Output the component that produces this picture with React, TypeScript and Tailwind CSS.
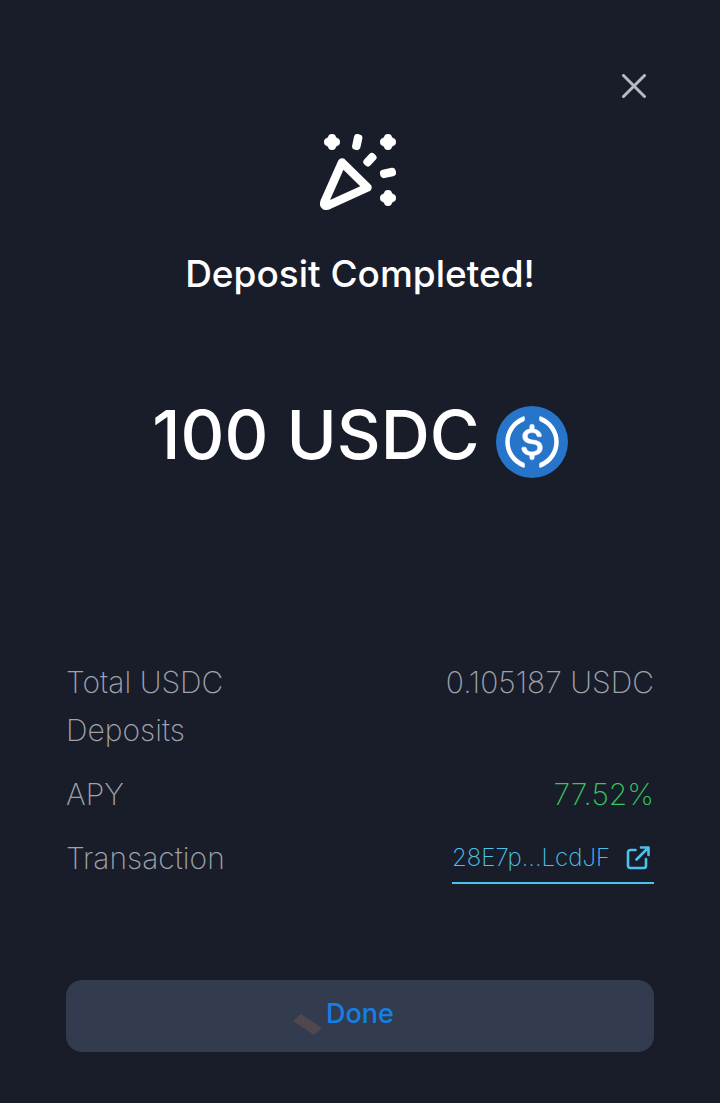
import type { ReactNode } from "react";

function PartyIcon() {
  return (
    <svg className="h-19 w-20" viewBox="0 0 80 76" fill="none" aria-hidden="true">
      <path d="M22 28.500 47.500 53.500 9 71Q3 73.500 4.500 68Z" stroke="#fff" strokeWidth="8.500" strokeLinejoin="round" />
      <g fill="#fff">
        <rect x="33" y="0" width="8.500" height="16" rx="3.500" transform="rotate(12 37 8)" />
        <rect x="45.700" y="18.500" width="8.500" height="14.500" rx="3.500" transform="rotate(43 50 25.700)" />
        <rect x="60" y="34.700" width="16" height="8.500" rx="3.500" transform="rotate(-12 68 39)" />
      </g>
      <g stroke="#fff" strokeWidth="8" strokeLinecap="round">
        <path d="M12 4v8M8 8h8M68 4v8M64 8h8M68 60v8M64 64h8" />
      </g>
      <g fill="#fff">
        <circle cx="12" cy="8" r="6.300" />
        <circle cx="68" cy="8" r="6.300" />
        <circle cx="68" cy="64" r="6.300" />
      </g>
    </svg>
  );
}

function UsdcIcon() {
  return (
    <svg className="size-18 shrink-0" viewBox="-36 -36 72 72" role="img" aria-label="USDC">
      <circle r="36" fill="#2775ca" />
      <path
        d="M-7.200-24.200Q-7.200-26.300-9-25.500A27.200 27.200 0 0 0-9 25.500Q-7.200 26.300-7.200 24.200V22.200Q-7.200 21-8.500 20.400A22 22 0 0 1-8.500-20.400Q-7.200-21-7.200-22.200ZM7.200-24.200Q7.200-26.300 9-25.500A27.200 27.200 0 0 1 9 25.500Q7.200 26.300 7.200 24.200V22.200Q7.200 21 8.500 20.400A22 22 0 0 0 8.500-20.400Q7.200-21 7.200-22.200Z"
        fill="#fff"
      />
      <path
        d="M0-17.800a2.250 2.250 0 0 1 2.250 2.300v2.700c4.100.6 6.900 3.100 7.200 6.500q0 1-1 1H6.200q-1 0-1.300-1C4.300-8.400 2.800-9.400 0-9.400c-3 0-4.600 1.300-4.600 3.500 0 2.100 1 3.300 5.500 3.900C7.200-1.200 10.300.7 10.300 5.700c0 4.200-3.100 7.100-8.050 7.700v2.200a2.250 2.250 0 0 1-4.500 0v-2.200c-4.800-.6-7.500-3.400-8-7.200q0-1 1-1h2.500q.9 0 1.100 1C-5 8.600-3.400 9.900-.1 9.900 3.300 9.900 5.700 8.300 5.700 5.800c0-2.500-1.400-3.400-5.600-4C-6.200 1-9.300-1-9.300-5.700c0-3.800 2.800-6.600 7.050-7.200v-2.600A2.250 2.250 0 0 1 0-17.800Z"
        fill="#fff"
        stroke="#fff"
        strokeWidth=".5"
      />
    </svg>
  );
}

function ExternalLinkIcon() {
  return (
    <svg className="size-6 shrink-0" viewBox="0 0 24 24" fill="none" stroke="currentColor" strokeWidth="2.600" strokeLinecap="round" strokeLinejoin="round" aria-hidden="true">
      <path d="M9.500 4H4.300A2.300 2.300 0 0 0 2 6.300v13.400A2.300 2.300 0 0 0 4.300 22h13.400a2.300 2.300 0 0 0 2.300-2.300V13M15 1.500h7.500V9M22 2 10.500 13.500" />
    </svg>
  );
}

function Row({ label, children }: { label: string; children: ReactNode }) {
  return (
    <div className="flex items-start justify-between">
      <dt className="w-48 text-[#a0a2ac]">{label}</dt>
      <dd>{children}</dd>
    </div>
  );
}

export default function App() {
  return (
    <main className="flex min-h-screen flex-col bg-[#191d2a] px-[66px] pt-[66px] pb-[51px] font-['Inter',sans-serif] text-white">
      <button type="button" aria-label="Close" className="flex size-10 items-center justify-center self-end text-[#b9bac1]">
        <svg className="size-6" viewBox="0 0 24 24" fill="none" stroke="currentColor" strokeWidth="3" strokeLinecap="round" aria-hidden="true">
          <path d="M1.500 1.500l21 21M22.500 1.500l-21 21" />
        </svg>
      </button>
      <section className="mt-7 flex flex-col items-center">
        <PartyIcon />
        <h1 className="mt-10 text-[37px] leading-12 font-medium whitespace-nowrap">Deposit Completed!</h1>
        <div className="mt-23 flex items-end gap-4">
          <p className="text-[68px] leading-22 font-medium whitespace-nowrap">100 USDC</p>
          <UsdcIcon />
        </div>
      </section>
      <dl className="mt-45 flex flex-col gap-4 text-[30px] leading-12 font-extralight">
        <Row label="Total USDC Deposits">
          <span className="text-[#a0a2ac]">0.105187 USDC</span>
        </Row>
        <Row label="APY">
          <span className="text-[#38c55e]">77.52%</span>
        </Row>
        <Row label="Transaction">
          <a href="#transaction" className="flex items-center gap-4 border-b-2 border-[#4cc1ea] pr-1 text-[24px] text-[#4cc1ea]">
            28E7p...LcdJF
            <ExternalLinkIcon />
          </a>
        </Row>
      </dl>
      <button type="button" className="relative mt-24 flex h-18 w-full items-start justify-center rounded-2xl bg-[#333c4e] pt-4 text-[27px] leading-9 font-medium text-[#147fe6]">
        <svg className="absolute top-8 left-[226px] h-6 w-8" viewBox="0 0 32 24" aria-hidden="true">
          <path d="M1 9 9 2 30 16 22 23Z" fill="#50474f" />
        </svg>
        Done
      </button>
    </main>
  );
}
